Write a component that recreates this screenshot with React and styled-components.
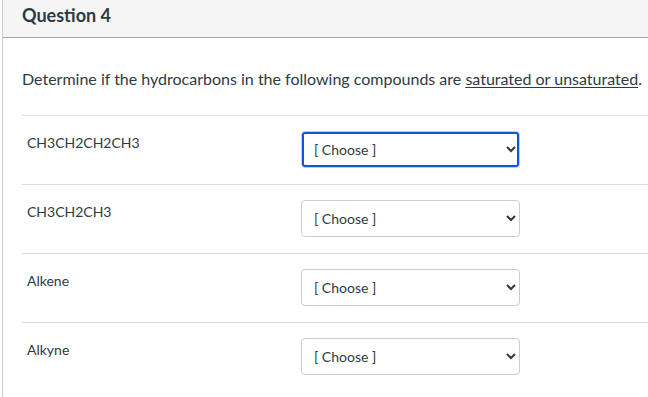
import React from "react";
import styled, { createGlobalStyle } from "styled-components";

const GlobalStyle = createGlobalStyle`
  html, body {
    margin: 0;
    padding: 0;
    background: #fff;
    overflow: hidden;
  }
  body {
    font-family: Lato, "Liberation Sans", sans-serif;
    color: #2d3b45;
  }
`;

const QuestionStyles = styled.div`
  margin-left: 2px;
  border-left: 1px solid #c7cdd1;
  min-height: 397px;
  .question {
    &-header {
      height: 37px;
      background: #f5f5f5;
      border-bottom: 1px solid #a5a5a5;
      display: flex;
      align-items: center;
      padding-left: 19px;
    }
    &-title {
      margin: 0;
      font-size: 18px;
      font-weight: 700;
      line-height: 22px;
      margin-top: -7px;
    }
    &-body {
      padding: 29px 0 0 19px;
    }
    &-text {
      margin: 0 0 24px;
      font-size: 16px;
      line-height: 24px;
      white-space: nowrap;
      u {
        text-decoration: underline;
        text-underline-offset: 2px;
      }
    }
  }
`;

const Row = styled.div`
  display: grid;
  grid-template-columns: 279px 219px;
  align-items: start;
  border-top: 1px solid #dcdfe2;
  padding: 15px 0 16px;
`;

const Label = styled.div`
  font-size: 14px;
  line-height: 20px;
  padding: 2px 0 0 5px;
`;

const Select = styled.select`
  width: 219px;
  height: 37px;
  font-family: Lato, "Liberation Sans", sans-serif;
  font-size: 14px;
  color: #2d3b45;
  background: #fff;
  border: 1px solid #c7cdd1;
  border-radius: 4px;
  padding: 0 8px;
  outline: ${(p) => (p.$focused ? "2px solid #1256d6" : "none")};
  outline-offset: -3px;
`;

const rows = ["CH3CH2CH2CH3", "CH3CH2CH3", "Alkene", "Alkyne"];

const App = () => {
  return (
    <>
      <GlobalStyle />
      <QuestionStyles>
        <div className="question-header">
          <h2 className="question-title">Question 4</h2>
        </div>
        <div className="question-body">
          <p className="question-text">
            Determine if the hydrocarbons in the following compounds are{" "}
            <u>saturated or unsaturated</u>.
          </p>
          {rows.map((label, i) => (
            <Row key={label}>
              <Label>{label}</Label>
              <Select $focused={i === 0} defaultValue="">
                <option value="">[ Choose ]</option>
                <option value="s">saturated</option>
                <option value="u">unsaturated</option>
              </Select>
            </Row>
          ))}
        </div>
      </QuestionStyles>
    </>
  );
};

export default App;
